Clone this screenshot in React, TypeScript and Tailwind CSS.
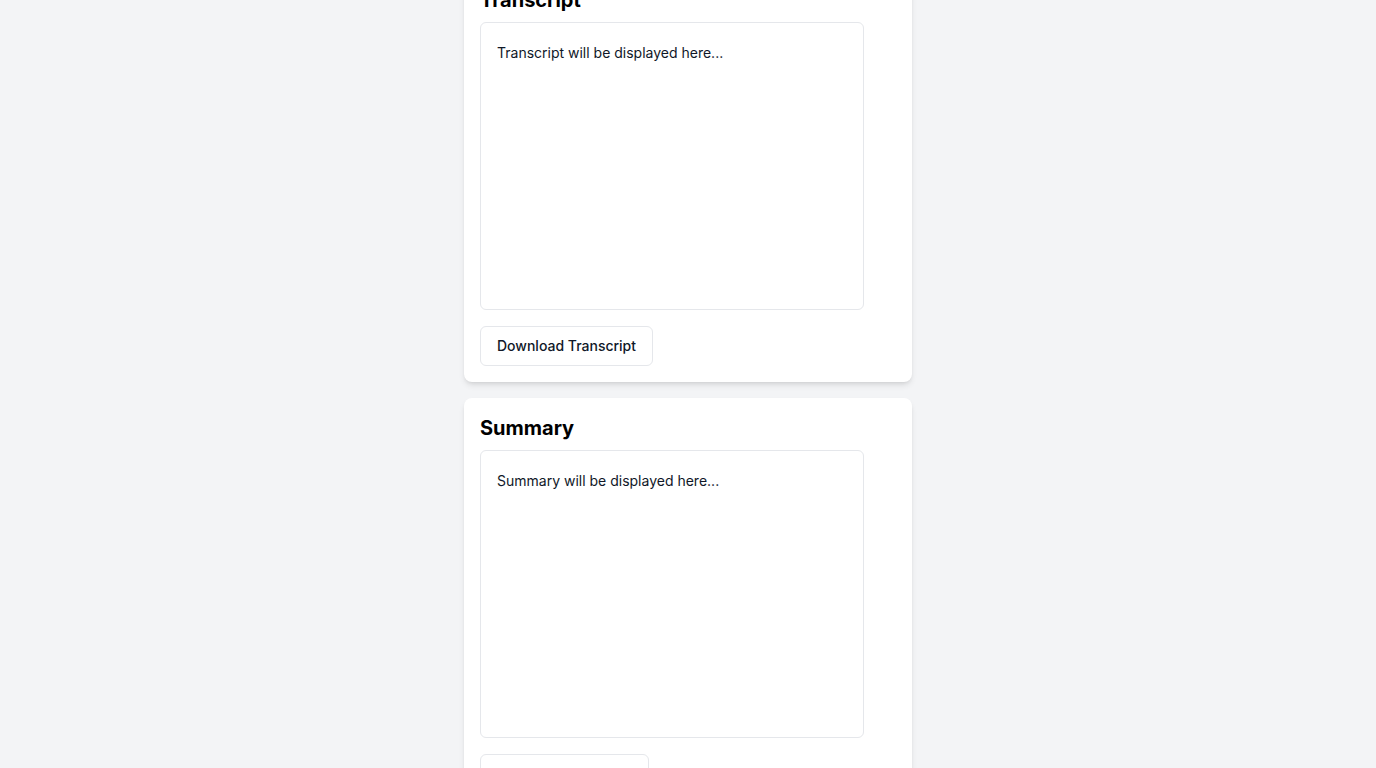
import React from "react";

function Section({ title, placeholder, button }: { title: string; placeholder: string; button: string }) {
  return (
    <div className="bg-white rounded-lg shadow-md p-4">
      <h2 className="text-xl font-bold leading-7 mb-2 text-black">{title}</h2>
      <div className="w-96 h-72 border border-gray-200 rounded-md px-4 pt-5 pb-4 text-sm text-gray-900">
        {placeholder}
      </div>
      <button className="mt-4 h-10 px-4 border border-gray-200 rounded-md bg-white text-sm font-medium text-gray-900">
        {button}
      </button>
    </div>
  );
}

export default function App() {
  return (
    <div
      className="min-h-screen bg-gray-100"
      style={{ fontFamily: "Inter, 'Noto Sans', sans-serif" }}
    >
      <div className="max-w-md mx-auto flex flex-col gap-4 mt-[-30px] pb-8">
        <Section title="Transcript" placeholder="Transcript will be displayed here..." button="Download Transcript" />
        <Section title="Summary" placeholder="Summary will be displayed here..." button="Download Summary" />
      </div>
    </div>
  );
}
